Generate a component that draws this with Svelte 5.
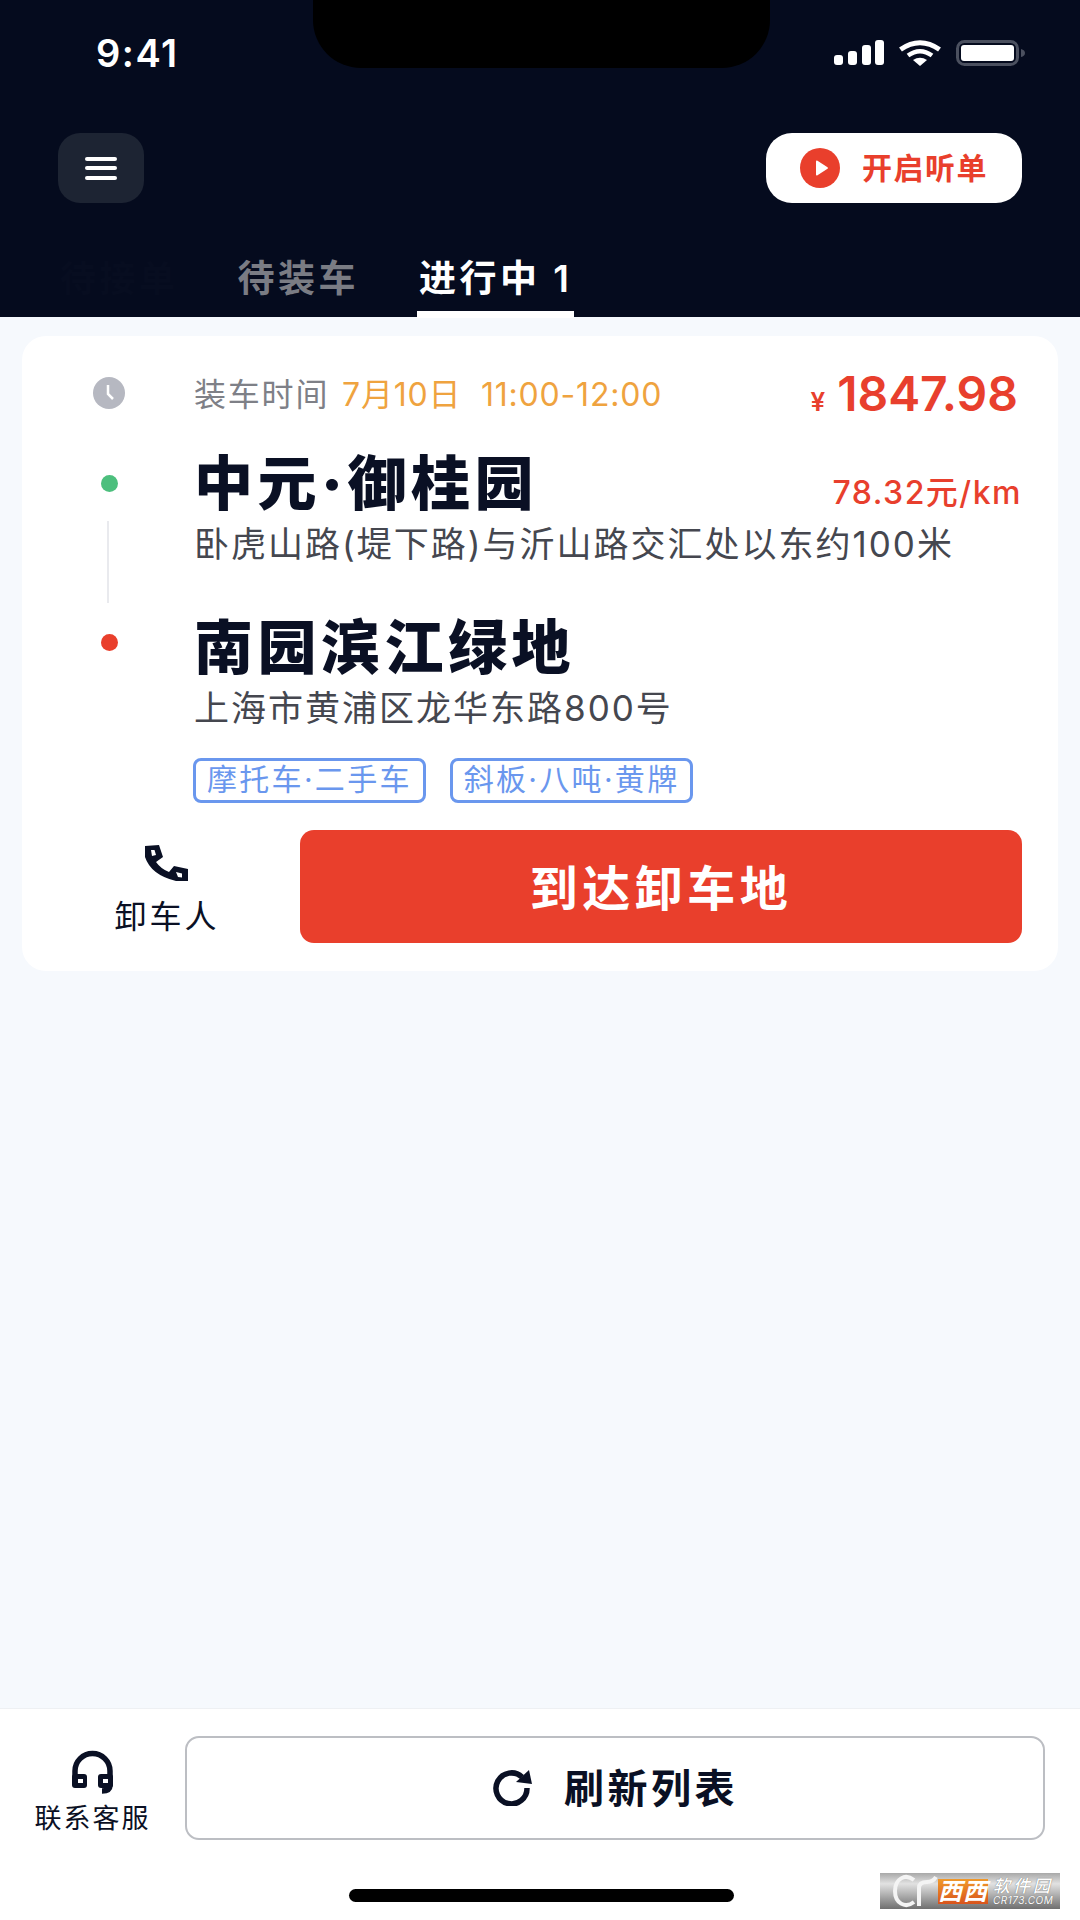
<script>
	const tabs = [
		{ label: '待接单', state: 'hidden' },
		{ label: '待装车', state: '' },
		{ label: '进行中 1', state: 'active' }
	];
	const tags = ['摩托车·二手车', '斜板·八吨·黄牌'];
</script>

<div class="page">
	<header class="head">
		<div class="notch"></div>
		<div class="status">
			<span class="time">9:41</span>
			<div class="status-icons">
				<svg width="50" height="26" viewBox="0 0 50 26" fill="#fff">
					<rect x="0" y="15" width="9" height="10" rx="3" />
					<rect x="14" y="11" width="9" height="14" rx="3" />
					<rect x="28" y="5" width="9" height="20" rx="3" />
					<rect x="41" y="0" width="9" height="25" rx="3" />
				</svg>
				<svg width="44" height="26" viewBox="0 0 44 26" fill="none" stroke="#fff">
					<path d="M2.5 9.5Q22-4 41.5 9.5" stroke-width="5" />
					<path d="M10 15.5Q22 7 34 15.5" stroke-width="4.5" />
					<path d="M15 20Q22 15.5 29 20L22 26Z" fill="#fff" stroke="none" />
				</svg>
				<svg width="70" height="26" viewBox="0 0 70 26" fill="none">
					<rect x="1.5" y="1.5" width="60" height="23" rx="7" stroke="#4b505f" stroke-width="3" />
					<rect x="5" y="5" width="53" height="16" rx="3" fill="#fff" />
					<path d="M65 9q4 1 4 4t-4 4z" fill="#4b505f" />
				</svg>
			</div>
		</div>

		<div class="toolbar">
			<button class="menu" aria-label="菜单">
				<span></span><span></span><span></span>
			</button>
			<button class="listen">
				<svg width="40" height="40" viewBox="0 0 40 40">
					<circle cx="20" cy="20" r="20" fill="#e93f2c" />
					<path d="M16 13.5v13a1 1 0 0 0 1.500.8l10-6.500a1 1 0 0 0 0-1.600l-10-6.500a1 1 0 0 0-1.500.8z" fill="#fff" />
				</svg>
				<span>开启听单</span>
			</button>
		</div>

		<nav class="tabs">
			{#each tabs as tab}
				<span class="tab {tab.state}">{tab.label}</span>
			{/each}
		</nav>
	</header>

	<main class="list">
		<article class="card">
			<div class="time-row">
				<div class="rail">
					<svg width="32" height="32" viewBox="0 0 32 32">
						<circle cx="16" cy="16" r="16" fill="#b6b8c1" />
						<path d="M15 8v9l5 5" fill="none" stroke="#fff" stroke-width="2.500" />
					</svg>
				</div>
				<div class="load-time">装车时间 <em>7月10日&nbsp; 11:00-12:00</em></div>
				<div class="price"><small>¥</small>1847.98</div>
			</div>

			<div class="stop first">
				<div class="rail">
					<i class="dot green"></i>
					<i class="line"></i>
				</div>
				<div class="stop-body">
					<div class="title-row">
						<h2>中元·御桂园</h2>
						<span class="rate">78.32元/km</span>
					</div>
					<p>卧虎山路(堤下路)与沂山路交汇处以东约100米</p>
				</div>
			</div>

			<div class="stop second">
				<div class="rail">
					<i class="dot red"></i>
				</div>
				<div class="stop-body">
					<h2>南园滨江绿地</h2>
					<p>上海市黄浦区龙华东路800号</p>
				</div>
			</div>

			<div class="tags">
				{#each tags as tag}
					<span class="tag">{tag}</span>
				{/each}
			</div>

			<div class="actions">
				<button class="contact">
					<svg width="44" height="37" viewBox="0 0 44 37" fill="#0a1024" fill-rule="evenodd">
						<path d="M0 1L14 0L18 12L11 17Q16 24 24 27L29 21L43 24V36H31Q6 30 0 12ZM6 5L9.500 5L11 10L7 11ZM31 27L37 28.500V32.500L33 32Z" />
					</svg>
					<span>卸车人</span>
				</button>
				<button class="primary">到达卸车地</button>
			</div>
		</article>
	</main>

	<footer class="bar">
		<div class="bar-row">
			<button class="service">
				<svg width="44" height="44" viewBox="0 0 44 44" fill="none">
					<path d="M4 30V21a17.500 17.500 0 0 1 35 0V35q0 6-8 6" stroke="#0a1024" stroke-width="5.500" />
					<rect x="1" y="24" width="15" height="14" rx="3" fill="#0a1024" />
					<rect x="27" y="24" width="15" height="14" rx="3" fill="#0a1024" />
					<rect x="7" y="29" width="5" height="4" fill="#fff" />
					<rect x="32" y="29" width="5" height="4" fill="#fff" />
				</svg>
				<span>联系客服</span>
			</button>
			<button class="refresh">
				<svg width="42" height="36" viewBox="0 0 42 36" fill="none">
					<path d="M35 18A15.500 15.500 0 1 1 30 7" stroke="#0a1024" stroke-width="5.500" />
					<path d="M37 0L40 14L24 12Z" fill="#0a1024" />
				</svg>
				<span>刷新列表</span>
			</button>
		</div>
		<div class="home"></div>
	</footer>

	<div class="mark">
		<svg width="46" height="36" viewBox="0 0 46 36" fill="none">
			<path d="M22 7C13 0 3 6 3 18s10 18 19 11" stroke="#f4f4f4" stroke-width="4" />
			<path d="M27 33V15q0-6 8-6M35 9q6 0 9-5" stroke="#f4f4f4" stroke-width="4" />
		</svg>
		<span class="mark-brand">西西</span>
		<span class="mark-site"><b>软件园</b><small>CR173.COM</small></span>
	</div>
</div>

<style>
	:global(body) {
		margin: 0;
	}

	.page {
		position: relative;
		display: flex;
		flex-direction: column;
		width: 1080px;
		height: 1920px;
		overflow: hidden;
		background: #f6f9fd;
		font-family: Inter, "Noto Sans CJK SC", sans-serif;
		color: #0a1024;
	}

	button {
		padding: 0;
		border: 0;
		background: none;
		font-family: inherit;
		color: inherit;
	}

	h2,
	p {
		margin: 0;
	}

	.head {
		position: relative;
		height: 317px;
		background: #050b1e;
		flex: none;
	}

	.notch {
		position: absolute;
		left: 313px;
		top: 0;
		width: 457px;
		height: 68px;
		background: #000;
		border-radius: 0 0 48px 48px;
	}

	.status {
		display: flex;
		justify-content: space-between;
		align-items: center;
		height: 40px;
		padding: 33px 54px 0 96px;
	}

	.time {
		font-size: 38px;
		font-weight: 600;
		color: #fff;
		letter-spacing: 1.500px;
	}

	.status-icons {
		display: flex;
		align-items: center;
		gap: 14px;
	}

	.toolbar {
		display: flex;
		justify-content: space-between;
		align-items: center;
		margin-top: 60px;
		padding: 0 58px;
	}

	.menu {
		display: flex;
		flex-direction: column;
		align-items: center;
		justify-content: center;
		gap: 5.500px;
		width: 86px;
		height: 70px;
		border-radius: 22px;
		background: #1d2433;
	}

	.menu span {
		width: 32px;
		height: 4px;
		border-radius: 2px;
		background: #fff;
	}

	.listen {
		display: flex;
		align-items: center;
		gap: 22px;
		width: 256px;
		height: 70px;
		padding-left: 34px;
		box-sizing: border-box;
		border-radius: 26px;
		background: #fff;
		font-size: 30px;
		font-weight: 600;
		letter-spacing: 1.500px;
		color: #e93f2c;
	}

	.listen span {
		margin-top: -4px;
	}

	.tabs {
		display: flex;
		margin-top: 44px;
		padding-left: 60px;
	}

	.tab {
		position: relative;
		font-size: 37px;
		font-weight: 600;
		line-height: 64px;
		letter-spacing: 3.500px;
		color: #7a7c84;
		margin-right: 60px;
		white-space: nowrap;
	}

	.tab.hidden {
		color: #070d20;
		font-size: 36px;
		margin-right: 59px;
	}

	.tab.active {
		color: #fff;
	}

	.tab.active::after {
		content: "";
		position: absolute;
		left: -2px;
		right: -2px;
		bottom: -7px;
		height: 7px;
		background: #fff;
	}

	.list {
		flex: 1;
		padding: 19px 22px 0;
	}

	.card {
		background: #fff;
		border-radius: 24px;
		padding: 27px 36px 28px 0;
	}

	.rail {
		flex: none;
		display: flex;
		flex-direction: column;
		align-items: center;
		width: 174px;
		margin-right: -2px;
	}

	.time-row {
		display: flex;
		align-items: center;
		height: 60px;
	}

	.load-time {
		flex: 1;
		margin-top: -3px;
		font-size: 32px;
		letter-spacing: 1.800px;
		color: #7e8087;
	}

	.load-time em {
		font-style: normal;
		margin-left: 2px;
		letter-spacing: 0.800px;
		color: #efa33f;
	}

	.price {
		font-size: 48px;
		font-weight: 600;
		color: #e83f2d;
		margin-right: 4px;
	}

	.price small {
		font-size: 26px;
		margin-right: 12px;
	}

	.stop {
		display: flex;
		height: 164px;
	}

	.first {
		margin-top: 23px;
	}

	.first .rail {
		padding-top: 29px;
	}

	.second .rail {
		padding-top: 24px;
	}

	.dot {
		width: 17px;
		height: 17px;
		border-radius: 50%;
	}

	.green {
		background: #4cbf7d;
	}

	.red {
		background: #e93f2c;
	}

	.line {
		width: 2px;
		height: 82px;
		margin-top: 29px;
		margin-right: 2px;
		background: #e9eaee;
	}

	.stop-body {
		flex: 1;
		min-width: 0;
	}

	.title-row {
		display: flex;
		justify-content: space-between;
	}

	h2 {
		font-size: 59px;
		font-weight: 900;
		line-height: 76px;
		letter-spacing: 4.500px;
		white-space: nowrap;
	}

	.rate {
		margin-top: 23px;
		font-size: 32px;
		font-weight: 500;
		line-height: 48px;
		letter-spacing: 1.500px;
		color: #e83f2d;
	}

	p {
		margin-top: -2px;
		font-size: 35px;
		line-height: 48px;
		letter-spacing: 2px;
		color: #45474f;
		white-space: nowrap;
	}

	.tags {
		display: flex;
		gap: 24px;
		margin: -16px 0 0 171px;
	}

	.tag {
		box-sizing: border-box;
		height: 45px;
		padding: 0 11px;
		border: 3px solid #6a97ee;
		border-radius: 8px;
		font-size: 30px;
		line-height: 37px;
		letter-spacing: 2.300px;
		color: #6a97ee;
		white-space: nowrap;
	}

	.actions {
		display: flex;
		margin-top: 27px;
	}

	.contact {
		flex: none;
		display: flex;
		flex-direction: column;
		align-items: center;
		width: 266px;
		margin-left: 12px;
		padding-top: 15px;
		font-size: 32px;
		letter-spacing: 3px;
	}

	.contact span {
		margin-top: 9px;
	}

	.primary {
		flex: 1;
		height: 113px;
		padding-bottom: 4px;
		border-radius: 14px;
		background: #e93f2c;
		font-size: 48px;
		font-weight: 700;
		letter-spacing: 4.500px;
		color: #fff;
	}

	.bar {
		flex: none;
		box-sizing: border-box;
		height: 212px;
		padding-top: 27px;
		background: #fff;
		border-top: 1px solid #eef0f3;
	}

	.bar-row {
		display: flex;
		padding-right: 35px;
	}

	.service {
		flex: none;
		display: flex;
		flex-direction: column;
		align-items: center;
		width: 185px;
		padding-top: 14px;
		font-size: 27px;
		letter-spacing: 2px;
	}

	.service span {
		margin-top: 3px;
	}

	.refresh {
		flex: 1;
		display: flex;
		align-items: center;
		justify-content: center;
		gap: 30px;
		box-sizing: border-box;
		height: 104px;
		border: 2.500px solid #bcbec3;
		border-radius: 14px;
		font-size: 40px;
		font-weight: 700;
		letter-spacing: 3.500px;
	}

	.refresh span {
		margin-top: -5px;
	}

	.home {
		width: 385px;
		height: 13px;
		margin: 49px auto 0 349px;
		border-radius: 7px;
		background: #000;
	}

	.mark {
		position: absolute;
		left: 880px;
		top: 1873px;
		box-sizing: border-box;
		display: flex;
		align-items: center;
		width: 180px;
		height: 36px;
		padding-left: 12px;
		background: linear-gradient(#a8a8a8, #e2e2e2 30%, #6f6f6f);
		overflow: hidden;
	}

	.mark svg {
		flex: none;
	}

	.mark-brand {
		flex: none;
		background: linear-gradient(#f09a2c, #d9541c);
		font-size: 24px;
		font-weight: 700;
		font-style: italic;
		line-height: 25px;
		letter-spacing: 1px;
		color: #fff;
	}

	.mark-site {
		display: flex;
		flex-direction: column;
		margin-left: 5px;
		color: #fff;
		white-space: nowrap;
		font-style: italic;
		text-shadow: 0 0 1px #555;
	}

	.mark-site b {
		font-size: 17px;
		font-weight: 500;
		letter-spacing: 3px;
		line-height: 18px;
	}

	.mark-site small {
		font-size: 10px;
		line-height: 11px;
		letter-spacing: 0.500px;
	}
</style>
